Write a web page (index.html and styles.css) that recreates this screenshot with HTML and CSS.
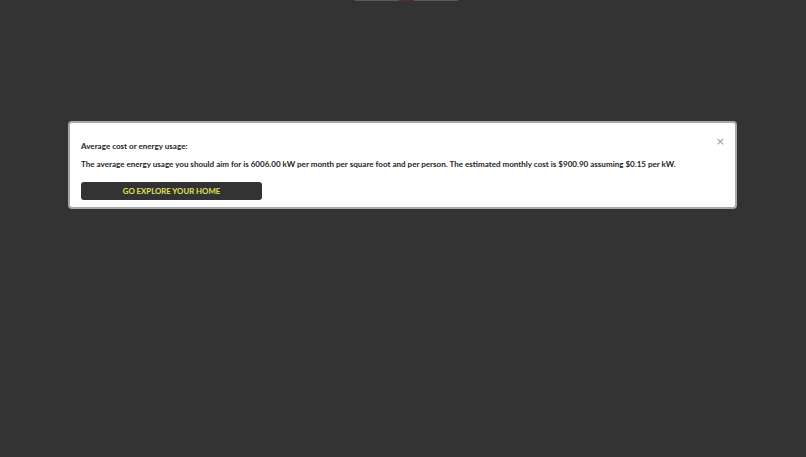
FILE: index.html
```html
<!DOCTYPE html>
<html>
<head>
<meta charset="utf-8">
<link rel="stylesheet" href="styles.css">
</head>
<body>
<div class="topbar"><span class="seg"></span><span class="seg red"></span><span class="seg"></span></div>
<div class="stage">
  <div class="modal">
    <button class="close" aria-label="Close">&times;</button>
    <p class="title">Average cost or energy usage:</p>
    <p class="text">The average energy usage you should aim for is 6006.00 kW per month per square foot and per person. The estimated monthly cost is $900.90 assuming $0.15 per kW.</p>
    <button class="cta">GO EXPLORE YOUR HOME</button>
  </div>
</div>
</body>
</html>
```
FILE: styles.css
```css
html, body {
  margin: 0;
  padding: 0;
  width: 806px;
  height: 457px;
  background: #333333;
  font-family: Lato, "Open Sans", sans-serif;
  overflow: hidden;
}
.topbar {
  position: absolute;
  top: 0;
  left: 355px;
  display: flex;
  height: 1px;
}
.seg {
  display: block;
  width: 44px;
  height: 1px;
  background: #5a5a5a;
}
.seg.red {
  width: 15px;
  background: #5a2a2a;
}
.stage {
  padding: 121px 0 0 68px;
}
.modal {
  position: relative;
  box-sizing: border-box;
  width: 669px;
  height: 88px;
  background: #ffffff;
  border: 2px solid #a8a8a8;
  border-radius: 4px;
  padding: 17px 10px 0 11px;
  color: #262626;
}
.close {
  position: absolute;
  top: 12px;
  right: 10px;
  border: none;
  background: none;
  color: #999;
  font-family: "DejaVu Sans", sans-serif;
  font-size: 11px;
  line-height: 14px;
  padding: 0;
}
.title {
  margin: 0;
  font-size: 8.05px;
  font-weight: 700;
  line-height: 12px;
}
.text {
  margin: 6px 0 0 0;
  font-size: 8.05px;
  font-weight: 700;
  line-height: 12px;
}
.cta {
  display: block;
  margin-top: 12px;
  width: 181px;
  height: 18px;
  background: #333333;
  color: #e2e05c;
  border: none;
  border-radius: 3px;
  font-family: Lato, sans-serif;
  font-weight: 700;
  font-size: 7.8px;
  padding: 0;
}
```
